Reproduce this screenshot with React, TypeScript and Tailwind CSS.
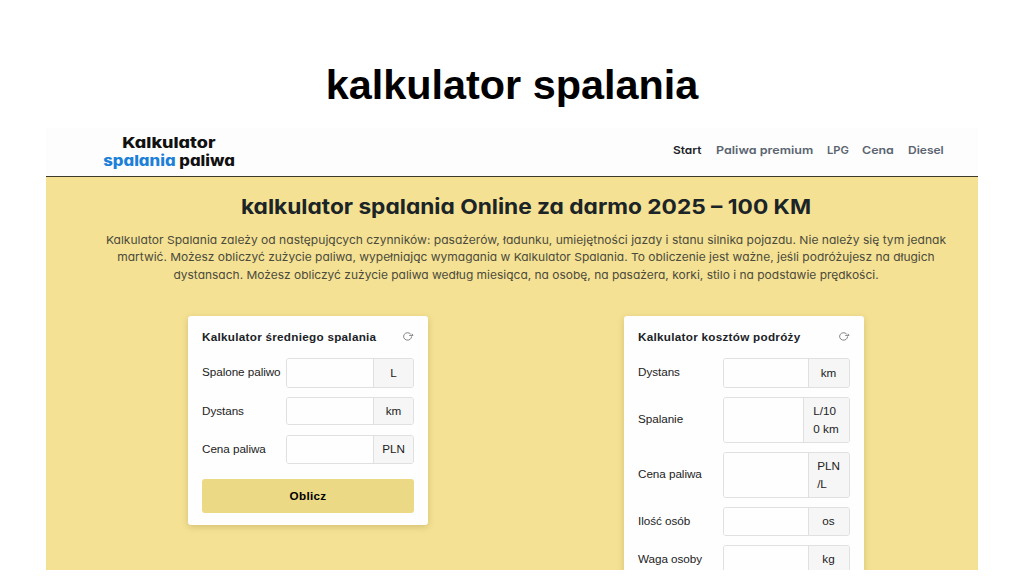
import React from 'react';

interface Field {
  label: string;
  unit: string;
  unitWidth: string;
  height: string;
}

interface CalculatorProps {
  title: string;
  fields: Field[];
  width: string;
  inputWidth: string;
  showButton?: boolean;
}

const NAV_ITEMS = [
  { label: 'Start', width: 'w-[42.5px]', scale: 'scale-x-[1.085]', active: true },
  { label: 'Paliwa premium', width: 'w-[111px]', scale: 'scale-x-[1.14]', active: false },
  { label: 'LPG', width: 'w-[35.5px]', scale: 'scale-x-[1.02]', active: false },
  { label: 'Cena', width: 'w-[46px]', scale: 'scale-x-[1.13]', active: false },
  { label: 'Diesel', width: 'w-[36px]', scale: 'scale-x-[1.09]', active: false },
];

const AVERAGE_FIELDS: Field[] = [
  { label: 'Spalone paliwo', unit: 'L', unitWidth: 'w-[40px]', height: 'h-[30px]' },
  { label: 'Dystans', unit: 'km', unitWidth: 'w-[40px]', height: 'h-[28px]' },
  { label: 'Cena paliwa', unit: 'PLN', unitWidth: 'w-[40px]', height: 'h-[29px]' },
];

const TRIP_FIELDS: Field[] = [
  { label: 'Dystans', unit: 'km', unitWidth: 'w-[41px]', height: 'h-[30px]' },
  { label: 'Spalanie', unit: 'L/10\n0 km', unitWidth: 'w-[46px]', height: 'h-[45.5px]' },
  { label: 'Cena paliwa', unit: 'PLN\n/L', unitWidth: 'w-[41px]', height: 'h-[45.5px]' },
  { label: 'Ilość osób', unit: 'os', unitWidth: 'w-[41px]', height: 'h-[28.5px]' },
  { label: 'Waga osoby', unit: 'kg', unitWidth: 'w-[41px]', height: 'h-[28.5px]' },
];

const ResetIcon: React.FC = () => (
  <svg width="12" height="11" viewBox="0 0 12 11" fill="none" stroke="#777" strokeWidth="0.9">
    <path d="M9.6 5.4A4 3.7 0 1 1 8.6 3" />
    <path d="M7.2 4.4H11L9.9 2.8" />
  </svg>
);

const Calculator: React.FC<CalculatorProps> = ({ title, fields, width, inputWidth, showButton }) => (
  <section
    className={`shrink-0 rounded-[3px] bg-[#fefefe] px-[14px] pt-[13px] pb-3 font-['Liberation_Sans',Arial,sans-serif] text-[11.7px] text-[#222] shadow-[0_2px_6px_rgba(120,100,20,0.25)] ${width}`}
  >
    <div className="flex h-[15px] items-center justify-between">
      <h2 className="text-[11.7px] font-bold whitespace-nowrap tracking-[0.28px] text-[#1b2327]">{title}</h2>
      <ResetIcon />
    </div>
    <div className="mt-[14px] flex flex-col gap-[9.5px]">
      {fields.map((field) => (
        <div key={field.label} className="flex items-center justify-between">
          <label className="pb-[2px] whitespace-nowrap tracking-[-0.05px]">{field.label}</label>
          <div
            className={`flex overflow-hidden rounded-[3px] border border-[#e0e0e0] ${inputWidth} ${field.height}`}
          >
            <input className="min-w-0 flex-1 bg-[#fefefe] outline-none" />
            <span
              className={`flex shrink-0 items-center justify-center border-l border-[#e0e0e0] bg-[#f6f6f6] pb-px leading-[17.5px] whitespace-pre ${field.unitWidth}`}
            >
              {field.unit}
            </span>
          </div>
        </div>
      ))}
    </div>
    {showButton && (
      <button className="mt-[15.5px] block h-[33.5px] w-full rounded-[3px] bg-[#ebd985] pb-px text-[11.7px] font-bold tracking-[0.3px] text-black">
        Oblicz
      </button>
    )}
  </section>
);

const App: React.FC = () => {
  return (
    <div className="flex h-[576px] w-[1024px] flex-col overflow-hidden bg-white font-['Inter',sans-serif] [font-feature-settings:'cv11']">
      <h1 className="h-[128px] shrink-0 pt-[61px] text-center font-['Liberation_Sans',Arial,sans-serif] text-[41.4px] leading-[48px] font-bold text-black">
        kalkulator spalania
      </h1>

      <div className="mx-[46px] flex h-[442px] shrink-0 flex-col overflow-hidden bg-[#f4e194]">
        <header className="flex h-[49px] shrink-0 items-center justify-between border-b border-[#3d3a2c] bg-[#fdfdfd] pr-[34px] pl-[57px]">
          <div className="flex w-[132px] flex-col items-center pb-px text-[15px] leading-[18px] font-extrabold whitespace-nowrap text-[#111]">
            <span className="scale-x-[1.2]">Kalkulator</span>
            <span className="scale-x-[1.115]">
              <span className="text-[#1c80d8]">spalania</span> paliwa
            </span>
          </div>
          <nav className="flex pb-[4px] text-[11px] font-semibold whitespace-nowrap text-[#5a6470]">
            {NAV_ITEMS.map((item) => (
              <a
                key={item.label}
                className={`${item.width} ${item.active ? 'text-[#1c2227]' : ''}`}
              >
                <span className={`inline-block origin-left ${item.scale}`}>{item.label}</span>
              </a>
            ))}
          </nav>
        </header>

        <div className="pt-[15px] pl-[28px] text-center">
          <h2 className="scale-x-[1.107] text-[20.5px] leading-[30px] font-bold whitespace-nowrap text-[#1b2426]">
            kalkulator spalania Online za darmo 2025 – 100 KM
          </h2>
          <div className="mt-[10px] text-[11px] leading-[17.3px] whitespace-nowrap text-[#4c4b3b]">
            <p className="scale-x-[1.097]">Kalkulator Spalania zależy od następujących czynników: pasażerów, ładunku, umiejętności jazdy i stanu silnika pojazdu. Nie należy się tym jednak</p>
            <p className="scale-x-[1.089]">martwić. Możesz obliczyć zużycie paliwa, wypełniając wymagania w Kalkulator Spalania. To obliczenie jest ważne, jeśli podróżujesz na długich</p>
            <p className="scale-x-[1.089]">dystansach. Możesz obliczyć zużycie paliwa według miesiąca, na osobę, na pasażera, korki, stilo i na podstawie prędkości.</p>
          </div>
        </div>

        <main className="mt-[32px] flex items-start gap-[196px] pl-[142px]">
          <Calculator
            title="Kalkulator średniego spalania"
            fields={AVERAGE_FIELDS}
            width="w-[240px]"
            inputWidth="w-[128px]"
            showButton
          />
          <Calculator
            title="Kalkulator kosztów podróży"
            fields={TRIP_FIELDS}
            width="w-[239.5px]"
            inputWidth="w-[127px]"
          />
        </main>
      </div>
    </div>
  );
};

export default App;
